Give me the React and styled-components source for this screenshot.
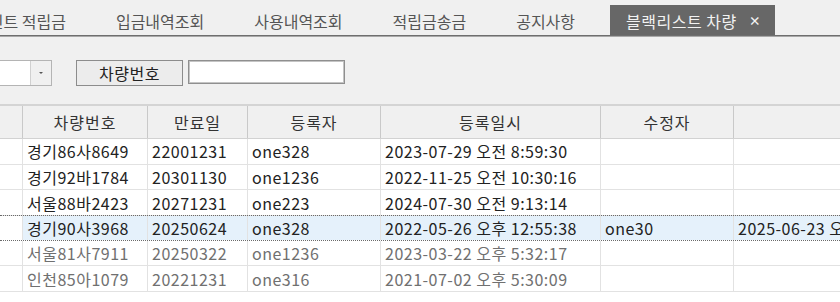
import React from "react"
import styled, { createGlobalStyle } from "styled-components"

const GlobalStyle = createGlobalStyle`
    html, body {
        margin: 0;
        padding: 0;
        background: #f0f0f0;
        font-family: "Noto Sans CJK KR", "Noto Sans", sans-serif;
    }
`

const Page = styled.div`
    width: 840px;
    height: 302px;
    overflow: hidden;
    display: flex;
    flex-direction: column;
`

const TabStrip = styled.div`
    height: 35px;
    display: flex;
    align-items: flex-end;
    border-bottom: 1px solid #6e6e6e;
    box-shadow: 0 1px 0 #a8a8a8;
    overflow: hidden;
`

const TabRow = styled.div`
    display: flex;
    margin-left: -51px;
`

const Tab = styled.div`
    height: 30px;
    line-height: 30px;
    padding: 1px 25px 0;
    box-sizing: border-box;
    font-size: 16px;
    color: #555555;
    white-space: nowrap;
`

const ActiveTab = styled(Tab)`
    margin-left: 10px;
    padding: 1px 14px 0 16px;
    letter-spacing: 0.5px;
    background: #676767;
    color: #f2f2f2;
    display: flex;
    gap: 12px;
`

const Close = styled.span`
    font-size: 12px;
    font-weight: bold;
    letter-spacing: 0;
    color: #f4f4f4;
`

const Toolbar = styled.div`
    display: flex;
    align-items: flex-start;
    padding-top: 24px;
    height: 26px;
`

const Combo = styled.div`
    width: 52px;
    height: 26px;
    box-sizing: border-box;
    border: 1px solid #b4b4b4;
    border-left: none;
    display: flex;
    background: #ffffff;
`

const ComboField = styled.div`
    flex: 1;
`

const ComboArrow = styled.div`
    width: 20px;
    border-left: 1px solid #d0d0d0;
    background: #f0f0f0;
    display: flex;
    align-items: center;
    justify-content: center;
    &::after {
        content: "";
        border-left: 2px solid transparent;
        border-right: 2px solid transparent;
        border-top: 2px solid #555;
    }
`

const Button = styled.div`
    margin-left: 24px;
    width: 107px;
    height: 26px;
    box-sizing: border-box;
    border: 1px solid #8c8c8c;
    background: #ececec;
    display: flex;
    align-items: center;
    justify-content: center;
    font-size: 16px;
    letter-spacing: 0.5px;
    color: #222222;
`

const Input = styled.div`
    margin-left: 5px;
    width: 157px;
    height: 24px;
    box-sizing: border-box;
    border: 1px solid #8f8f8f;
    box-shadow: inset 0 0 0 1px #c4c4c4;
    background: #ffffff;
`

const Grid = styled.div`
    margin-top: 18px;
    border-top: 2px solid #d4d4d4;
    background: #ffffff;
    flex: 1;
`

const cols = "23px 125px 100px 133px 220px 133px 220px"

const HeadRow = styled.div`
    display: grid;
    grid-template-columns: ${cols};
    height: 32px;
    background: #f0f0f0;
    border-bottom: 1px solid #d2d2d2;
`

const HeadCell = styled.div`
    border-right: 1px solid #c9c9c9;
    display: flex;
    align-items: center;
    justify-content: center;
    font-size: 16px;
    letter-spacing: 1px;
    color: #333333;
`

const Row = styled.div`
    display: grid;
    grid-template-columns: ${cols};
    height: 25.67px;
    box-sizing: border-box;
    border-bottom: ${p => p.$selected ? "1px dotted #6a6a6a" : "1px solid #e2e2e2"};
    border-top: ${p => p.$selected ? "1px dotted #6a6a6a" : "none"};
    margin-top: ${p => p.$selected ? "-1px" : "0"};
    color: ${p => p.$muted ? "#707070" : "#222222"};
`

const Cell = styled.div`
    border-right: 1px solid #e2e2e2;
    padding-left: 4px;
    display: flex;
    align-items: center;
    font-size: 16px;
    letter-spacing: 0.5px;
    white-space: nowrap;
    overflow: hidden;
    background: ${p => p.$selected ? "#e5f1fb" : "#ffffff"};
`

const Gutter = styled.div`
    border-right: 1px solid #e2e2e2;
    background: #ffffff;
`

const headers = ["차량번호", "만료일", "등록자", "등록일시", "수정자", ""]

const rows = [
    ["경기86사8649", "22001231", "one328", "2023-07-29 오전 8:59:30", "", ""],
    ["경기92바1784", "20301130", "one1236", "2022-11-25 오전 10:30:16", "", ""],
    ["서울88바2423", "20271231", "one223", "2024-07-30 오전 9:13:14", "", ""],
    ["경기90사3968", "20250624", "one328", "2022-05-26 오후 12:55:38", "one30", "2025-06-23 오후 3:12:40"],
    ["서울81사7911", "20250322", "one1236", "2023-03-22 오후 5:32:17", "", ""],
    ["인천85아1079", "20221231", "one316", "2021-07-02 오후 5:30:09", "", ""]
]

const App = () => {
    return (
        <Page>
            <GlobalStyle />
            <TabStrip>
                <TabRow>
                    <Tab>포인트 적립금</Tab>
                    <Tab>입금내역조회</Tab>
                    <Tab>사용내역조회</Tab>
                    <Tab>적립금송금</Tab>
                    <Tab>공지사항</Tab>
                    <ActiveTab>블랙리스트 차량<Close>×</Close></ActiveTab>
                </TabRow>
            </TabStrip>
            <Toolbar>
                <Combo>
                    <ComboField />
                    <ComboArrow />
                </Combo>
                <Button>차량번호</Button>
                <Input />
            </Toolbar>
            <Grid>
                <HeadRow>
                    <HeadCell />
                    {headers.map((h, i) => <HeadCell key={"h" + i}>{h}</HeadCell>)}
                </HeadRow>
                {rows.map((r, index) => {
                    const selected = index === 3
                    return (
                        <Row key={"row" + index} $selected={selected} $muted={index > 3}>
                            <Gutter />
                            {r.map((v, i) => <Cell key={i} $selected={selected}>{v}</Cell>)}
                        </Row>
                    )
                })}
            </Grid>
        </Page>
    )
}

export default App
